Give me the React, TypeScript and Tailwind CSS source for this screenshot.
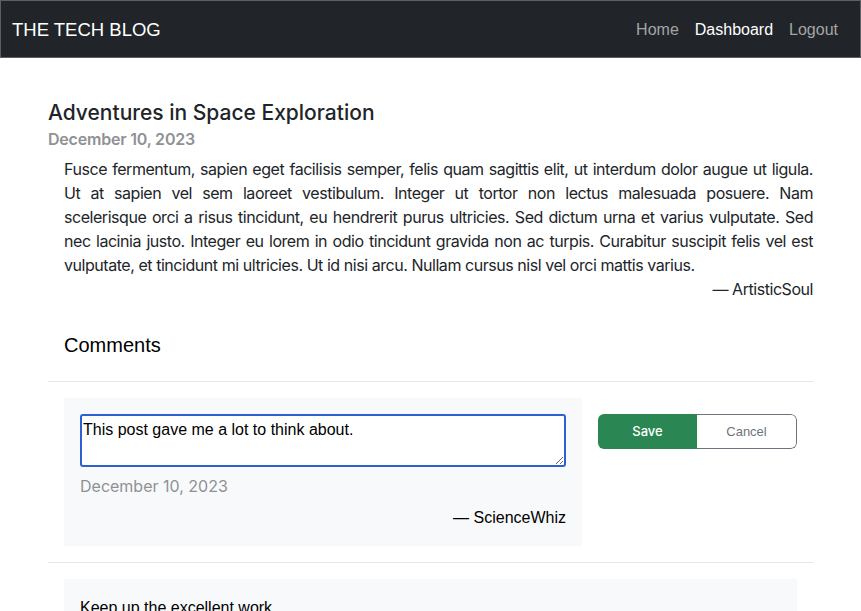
import React from 'react';

const bodyLines = [
  'Fusce fermentum, sapien eget facilisis semper, felis quam sagittis elit, ut interdum dolor augue ut ligula.',
  'Ut at sapien vel sem laoreet vestibulum. Integer ut tortor non lectus malesuada posuere. Nam',
  'scelerisque orci a risus tincidunt, eu hendrerit purus ultricies. Sed dictum urna et varius vulputate. Sed',
  'nec lacinia justo. Integer eu lorem in odio tincidunt gravida non ac turpis. Curabitur suscipit felis vel est',
  'vulputate, et tincidunt mi ultricies. Ut id nisi arcu. Nullam cursus nisl vel orci mattis varius.',
];

const Navbar = () => (
  <nav className="flex h-[58px] items-center justify-between border border-[#5c6066] bg-[#212529] px-[11px] pt-[2px] font-['Liberation_Sans',sans-serif]">
    <span className="text-[18.5px] text-white">THE TECH BLOG</span>
    <div className="flex gap-4 pr-[11px] text-[16px]">
      <a className="text-[#a3a5a8]">Home</a>
      <a className="text-white">Dashboard</a>
      <a className="text-[#a3a5a8]">Logout</a>
    </div>
  </nav>
);

const App = () => {
  return (
    <div className="min-h-screen bg-white font-['Inter',sans-serif] text-[#212529]">
      <Navbar />
      <main className="px-[48px] pt-[41px]">
        <h1 className="text-[21px] font-medium leading-[28px]">Adventures in Space Exploration</h1>
        <div className="text-[16px] font-semibold leading-[24px] tracking-[-0.2px] text-[#8f9194]">December 10, 2023</div>
        <div className="mt-[6px] pl-4 text-[16px] leading-[24px] tracking-[-0.45px]">
          {bodyLines.map((line, i) => (
            <div
              key={i}
              className={
                i < bodyLines.length - 1
                  ? 'whitespace-nowrap text-justify [text-align-last:justify]'
                  : 'whitespace-nowrap'
              }
            >
              {line}
            </div>
          ))}
          <div className="text-right">— ArtisticSoul</div>
        </div>

        <h2 className="mt-[30px] pl-4 font-['Liberation_Sans',sans-serif] text-[20px] font-medium leading-[28px] text-black">
          Comments
        </h2>
        <hr className="mt-[22px] border-[#e5e6e8]" />

        <div className="flex items-start gap-4 py-4 pl-4">
          <div className="w-[518px] bg-[#f8f9fa] p-4">
            <textarea
              defaultValue="This post gave me a lot to think about."
              className="block h-[53px] w-full rounded-[3px] border-2 border-[#2f5fd0] bg-white px-[1px] pt-[2px] pb-0 font-['Liberation_Sans',sans-serif] text-[16px] leading-[24px] text-black outline-none"
            />
            <div className="mt-[7px] text-[16px] leading-[24px] text-[#8f9194]">December 10, 2023</div>
            <div className="mt-[8px] text-right font-['Liberation_Sans',sans-serif] text-[16px] leading-[24px] text-black">
              — ScienceWhiz
            </div>
          </div>
          <div className="mt-4 flex h-[35px] w-[199px] overflow-hidden rounded-[6px] text-[13px]">
            <button className="w-[99px] bg-[#2a8753] font-medium text-white">Save</button>
            <button className="flex-1 rounded-r-[6px] border border-l-0 border-[#6c757d] bg-white font-['Liberation_Sans',sans-serif] text-[#6c757d]">
              Cancel
            </button>
          </div>
        </div>

        <hr className="border-[#e5e6e8]" />

        <div className="py-4 pl-4 pr-4">
          <div className="bg-[#f8f9fa] px-4 pt-[17px] pb-4 font-['Liberation_Sans',sans-serif] text-[16px] leading-[24px] text-black">
            Keep up the excellent work.
          </div>
        </div>
      </main>
    </div>
  );
};

export default App;
